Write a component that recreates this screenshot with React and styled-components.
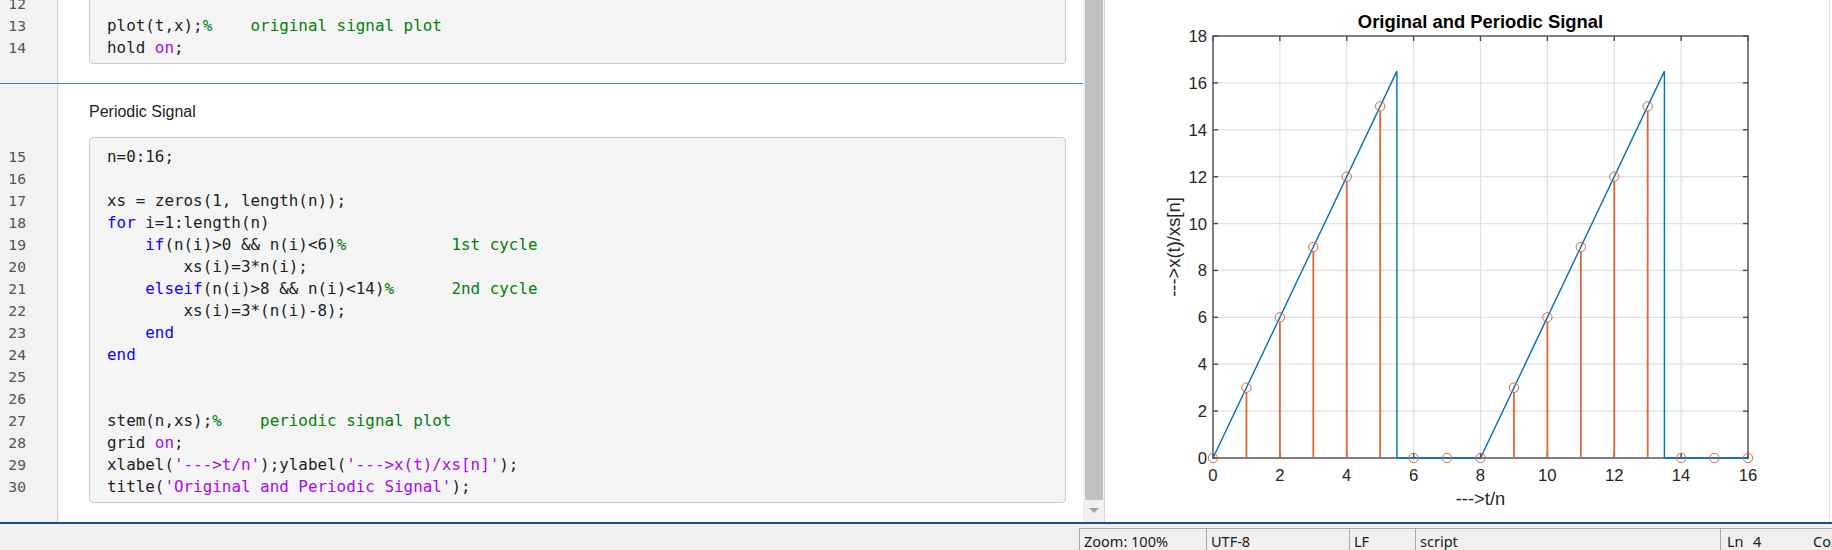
import styled, { createGlobalStyle } from 'styled-components'

const GlobalStyle = createGlobalStyle`
  html, body {
    margin: 0;
    padding: 0;
    background: #ffffff;
  }
  body {
    width: 1832px;
    height: 550px;
    overflow: hidden;
    font-family: 'Liberation Sans', Arial, sans-serif;
  }
`

const Window = styled.div`
  width: 1832px;
  height: 550px;
  display: flex;
  flex-direction: column;
  overflow: hidden;
`

const Workspace = styled.div`
  display: flex;
  height: 522px;
  flex: none;
  border-bottom: 2px solid #1d4e89;
`

const Editor = styled.div`
  width: 1083px;
  flex: none;
  display: flex;
  flex-direction: column;
  overflow: hidden;
  background: #ffffff;
`

const Section = styled.div`
  display: flex;
  flex: ${(p) => (p.$grow ? 1 : 'none')};
  margin-top: ${(p) => p.$shift || 0}px;
  border-bottom: ${(p) => (p.$divider ? '1px solid #3f7fc2' : 'none')};
`

const Gutter = styled.div`
  width: 57px;
  flex: none;
  padding-top: 9px;
  background: #f2f2f2;
  border-right: 1px solid #d4d4d4;
  box-shadow: 1px 0 1px rgba(0, 0, 0, 0.05);
`

const LineNo = styled.div`
  height: 22px;
  line-height: 22px;
  padding-right: 31px;
  text-align: right;
  font-family: 'DejaVu Sans Mono', monospace;
  font-size: 14.7px;
  color: #555555;
`

const Body = styled.div`
  flex: 1;
  min-width: 0;
  padding: ${(p) => p.$pt || 0}px 17px ${(p) => p.$pb || 0}px 31px;
`

const Heading = styled.div`
  height: 20px;
  line-height: 20px;
  font-family: 'Liberation Sans', Arial, sans-serif;
  font-size: 16px;
  color: #222222;
`

const CodeBox = styled.div`
  background: #f5f5f5;
  border: 1px solid #c9c9c9;
  border-radius: 4px;
  padding: 8px 0 4px 17px;
  font-family: 'DejaVu Sans Mono', monospace;
  font-size: 15.9px;
  color: #1e1e1e;
`

const CodeLine = styled.div`
  height: 22px;
  line-height: 22px;
  white-space: pre;
`

const tokenColors = {
  k: '#0e00ff',
  s: '#a709f5',
  c: '#028009',
}

const Token = styled.span`
  color: ${(p) => tokenColors[p.$kind] || 'inherit'};
`

const Scroll = styled.div`
  width: 18px;
  flex: none;
  display: flex;
  flex-direction: column;
  align-items: stretch;
  padding: 0 1px 0 2px;
  background: #f0f0f0;
  border-right: 1px solid #d8d8d8;
`

const Thumb = styled.div`
  height: 500px;
  background: #c1c1c1;
`

const ArrowDown = styled.div`
  align-self: center;
  margin-top: 8px;
  width: 0;
  height: 0;
  border-left: 5px solid transparent;
  border-right: 5px solid transparent;
  border-top: 5px solid #a3a3a3;
`

const FigurePanel = styled.div`
  flex: 1;
  background: #ffffff;
  border-right: 1px solid #e2e2e2;
  margin-right: 3px;
`

const Plot = styled.svg`
  display: block;
  font-family: 'Liberation Sans', Arial, sans-serif;
`

const StatusBar = styled.div`
  flex: 1;
  display: flex;
  padding-top: 4px;
  background: #f0f0f0;
  overflow: hidden;
`

const Spacer = styled.div`
  flex: 1;
`

const Cell = styled.div`
  width: ${(p) => p.$w}px;
  flex: none;
  display: flex;
  padding: 3px 0 0 ${(p) => p.$pl || 4}px;
  border-left: 1px solid #acacac;
  border-top: 1px solid #acacac;
  font-family: 'Noto Sans', sans-serif;
  font-size: 14.5px;
  line-height: 18px;
  color: #1a1a1a;
  white-space: nowrap;
  overflow: hidden;
  box-sizing: border-box;
`

const Field = styled.span`
  width: ${(p) => (p.$w ? `${p.$w}px` : 'auto')};
  flex: none;
`

const topLines = [
  { n: 12, t: [] },
  { n: 13, t: [['', 'plot(t,x);'], ['c', '%    original signal plot']] },
  { n: 14, t: [['', 'hold '], ['s', 'on'], ['', ';']] },
]

const mainLines = [
  { n: 15, t: [['', 'n=0:16;']] },
  { n: 16, t: [] },
  { n: 17, t: [['', 'xs = zeros(1, length(n));']] },
  { n: 18, t: [['k', 'for'], ['', ' i=1:length(n)']] },
  { n: 19, t: [['', '    '], ['k', 'if'], ['', '(n(i)>0 && n(i)<6)'], ['c', '%           1st cycle']] },
  { n: 20, t: [['', '        xs(i)=3*n(i);']] },
  { n: 21, t: [['', '    '], ['k', 'elseif'], ['', '(n(i)>8 && n(i)<14)'], ['c', '%      2nd cycle']] },
  { n: 22, t: [['', '        xs(i)=3*(n(i)-8);']] },
  { n: 23, t: [['', '    '], ['k', 'end']] },
  { n: 24, t: [['k', 'end']] },
  { n: 25, t: [] },
  { n: 26, t: [] },
  { n: 27, t: [['', 'stem(n,xs);'], ['c', '%    periodic signal plot']] },
  { n: 28, t: [['', 'grid '], ['s', 'on'], ['', ';']] },
  {
    n: 29,
    t: [
      ['', 'xlabel('],
      ['s', "'--->t/n'"],
      ['', ');ylabel('],
      ['s', "'--->x(t)/xs[n]'"],
      ['', ');'],
    ],
  },
  { n: 30, t: [['', 'title('], ['s', "'Original and Periodic Signal'"], ['', ');']] },
]

const CodeSection = ({ lines, shift, divider, grow, pb }) => (
  <Section $shift={shift} $divider={divider} $grow={grow}>
    <Gutter>
      {lines.map((l) => (
        <LineNo key={l.n}>{l.n}</LineNo>
      ))}
    </Gutter>
    <Body $pb={pb}>
      <CodeBox>
        {lines.map((l) => (
          <CodeLine key={l.n}>
            {l.t.map(([kind, text], i) => (
              <Token key={i} $kind={kind}>
                {text}
              </Token>
            ))}
          </CodeLine>
        ))}
      </CodeBox>
    </Body>
  </Section>
)

// figure geometry (panel-relative pixels)
const W = 724
const H = 522
const L = 108
const R = 643
const T = 36
const B = 458
const sx = (v) => L + (v / 16) * (R - L)
const sy = (v) => B - (v / 18) * (B - T)

const xTicks = [0, 2, 4, 6, 8, 10, 12, 14, 16]
const yTicks = [0, 2, 4, 6, 8, 10, 12, 14, 16, 18]
const xs = [0, 3, 6, 9, 12, 15, 0, 0, 0, 3, 6, 9, 12, 15, 0, 0, 0]
const signal = [
  [0, 0],
  [5.5, 16.5],
  [5.5, 0],
  [8, 0],
  [13.5, 16.5],
  [13.5, 0],
  [16, 0],
]

const Figure = () => (
  <Plot width={W} height={H} viewBox={`0 0 ${W} ${H}`}>
    {xTicks.slice(1, -1).map((v) => (
      <line key={`gx${v}`} x1={sx(v)} x2={sx(v)} y1={T} y2={B} stroke='#e1e1e1' strokeWidth='1.2' />
    ))}
    {yTicks.slice(1, -1).map((v) => (
      <line key={`gy${v}`} x1={L} x2={R} y1={sy(v)} y2={sy(v)} stroke='#e1e1e1' strokeWidth='1.2' />
    ))}

    <rect x={L} y={T} width={R - L} height={B - T} fill='none' stroke='#4a4a4a' strokeWidth='1.4' />
    {xTicks.map((v) => (
      <g key={`tx${v}`} stroke='#4a4a4a' strokeWidth='1.4'>
        <line x1={sx(v)} x2={sx(v)} y1={B} y2={B - 5} />
        <line x1={sx(v)} x2={sx(v)} y1={T} y2={T + 5} />
      </g>
    ))}
    {yTicks.map((v) => (
      <g key={`ty${v}`} stroke='#4a4a4a' strokeWidth='1.4'>
        <line x1={L} x2={L + 5} y1={sy(v)} y2={sy(v)} />
        <line x1={R} x2={R - 5} y1={sy(v)} y2={sy(v)} />
      </g>
    ))}

    <polyline
      points={signal.map(([x, y]) => `${sx(x)},${sy(y)}`).join(' ')}
      fill='none'
      stroke='#0072bd'
      strokeWidth='1.4'
    />

    {xs.map((y, n) => (
      <g key={`st${n}`} stroke='#de6633' fill='none'>
        {y > 0 && <line x1={sx(n)} x2={sx(n)} y1={B} y2={sy(y) + 4.7} strokeWidth='1.8' />}
        <circle cx={sx(n)} cy={sy(y)} r='4.7' strokeWidth='1' />
      </g>
    ))}

    {xTicks.map((v) => (
      <text key={`lx${v}`} x={sx(v)} y={481} textAnchor='middle' fontSize='16.7' fill='#262626'>
        {v}
      </text>
    ))}
    {yTicks.map((v) => (
      <text key={`ly${v}`} x={L - 6} y={sy(v) + 6} textAnchor='end' fontSize='16.7' fill='#262626'>
        {v}
      </text>
    ))}

    <text x={(L + R) / 2} y={28.3} textAnchor='middle' fontSize='18.4' fontWeight='bold' fill='#000'>
      Original and Periodic Signal
    </text>
    <text x={(L + R) / 2} y={505} textAnchor='middle' fontSize='18.4' fill='#262626'>
      ---&gt;t/n
    </text>
    <text
      x={75}
      y={(T + B) / 2}
      textAnchor='middle'
      fontSize='18.4'
      fill='#262626'
      transform={`rotate(-90 75 ${(T + B) / 2})`}
    >
      ---&gt;x(t)/xs[n]
    </text>
  </Plot>
)

const App = () => (
  <Window>
    <GlobalStyle />
    <Workspace>
      <Editor>
        <CodeSection lines={topLines} shift={-16} divider pb={19} />
        <Section>
          <Gutter />
          <Body $pt={18} $pb={15}>
            <Heading>Periodic Signal</Heading>
          </Body>
        </Section>
        <CodeSection lines={mainLines} grow pb={0} />
      </Editor>
      <Scroll>
        <Thumb />
        <ArrowDown />
      </Scroll>
      <FigurePanel>
        <Figure />
      </FigurePanel>
    </Workspace>
    <StatusBar>
      <Spacer />
      <Cell $w={127}>Zoom: 100%</Cell>
      <Cell $w={143}>UTF-8</Cell>
      <Cell $w={66}>LF</Cell>
      <Cell $w={305}>script</Cell>
      <Cell $w={112} $pl={6}>
        <Field $w={26}>Ln</Field>
        <Field $w={60}>4</Field>
        <Field>Col 1</Field>
      </Cell>
    </StatusBar>
  </Window>
)

export default App
